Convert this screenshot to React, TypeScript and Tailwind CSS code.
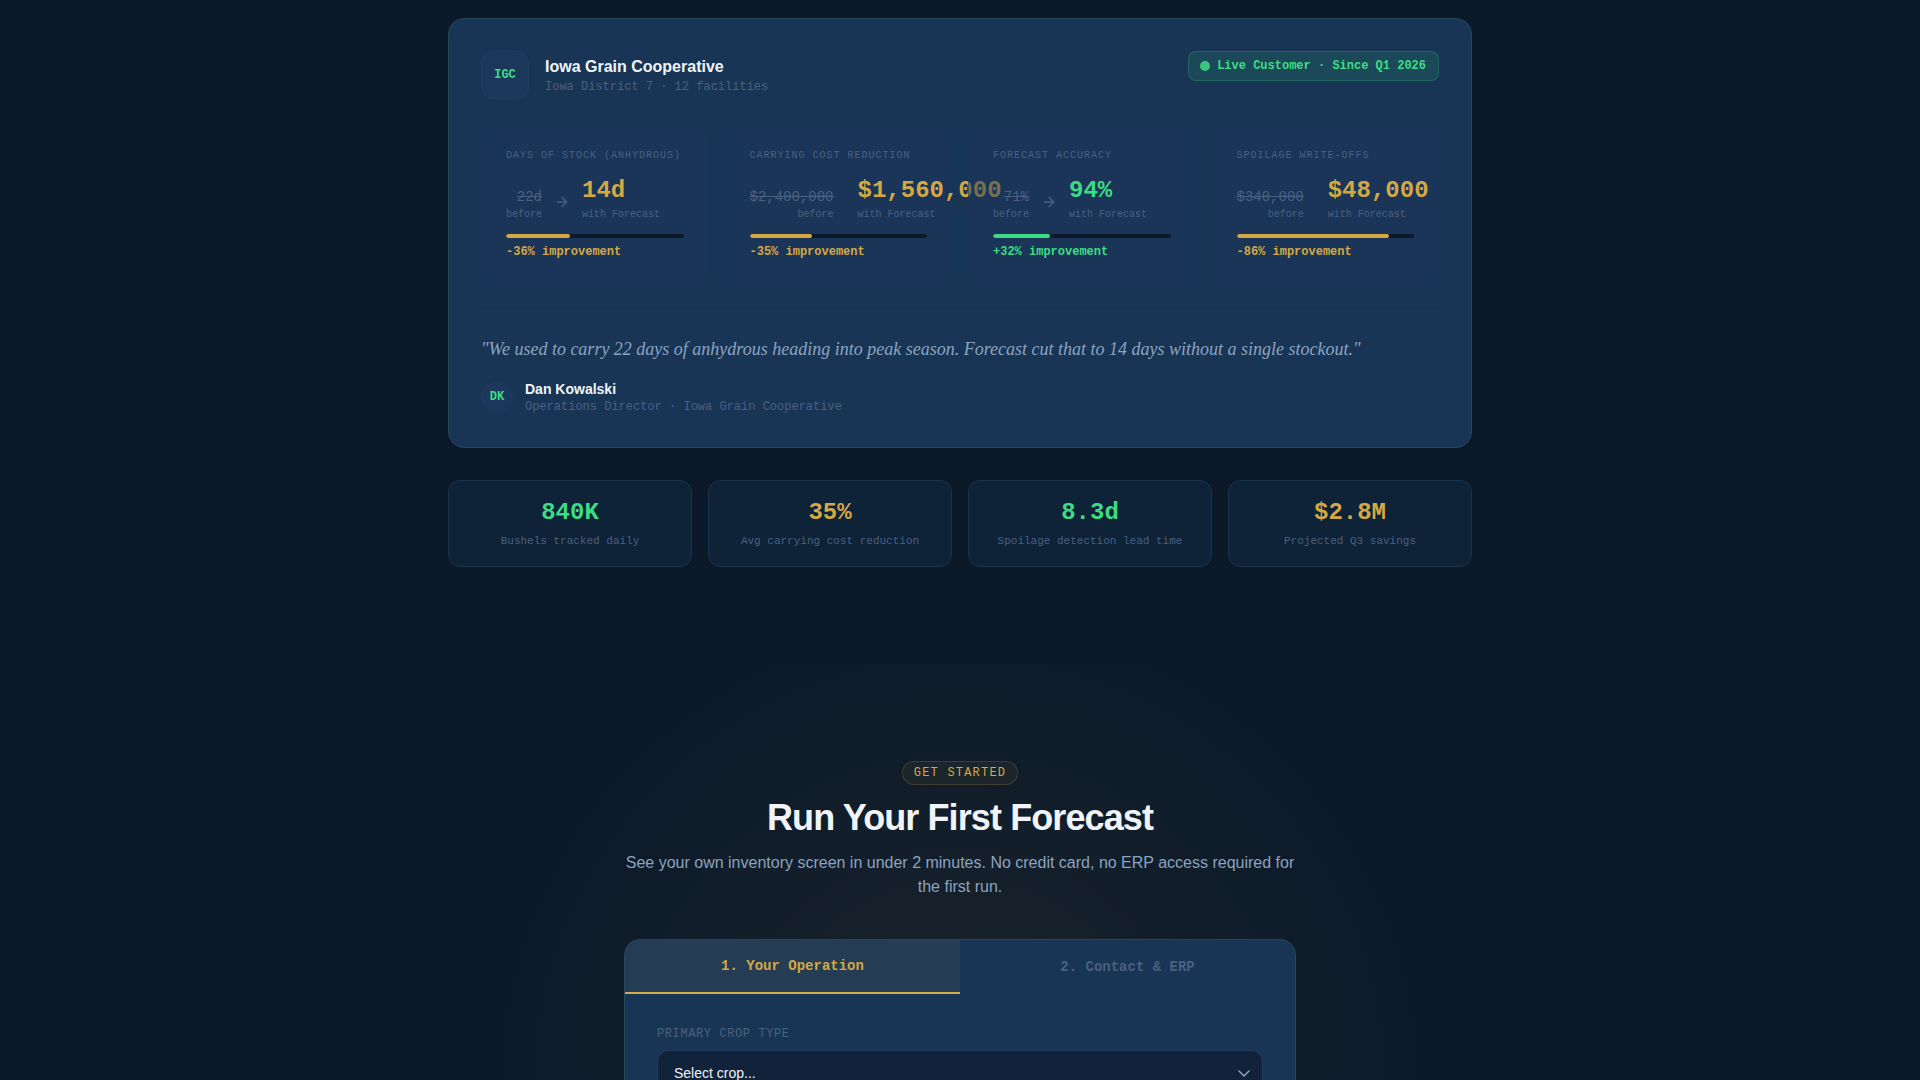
import { useState } from "react";
import { ArrowRight } from "lucide-react";

type Tone = "gold" | "green";

interface Metric {
  label: string;
  before: string;
  after: string;
  change: string;
  fill: number;
  tone: Tone;
}

const METRICS: Metric[] = [
  { label: "Days of Stock (Anhydrous)", before: "22d", after: "14d", change: "-36%", fill: 36, tone: "gold" },
  { label: "Carrying Cost Reduction", before: "$2,400,000", after: "$1,560,000", change: "-35%", fill: 35, tone: "gold" },
  { label: "Forecast Accuracy", before: "71%", after: "94%", change: "+32%", fill: 32, tone: "green" },
  { label: "Spoilage Write-offs", before: "$340,000", after: "$48,000", change: "-86%", fill: 86, tone: "gold" },
];

const STATS: { value: string; label: string; tone: Tone }[] = [
  { value: "840K", label: "Bushels tracked daily", tone: "green" },
  { value: "35%", label: "Avg carrying cost reduction", tone: "gold" },
  { value: "8.3d", label: "Spoilage detection lead time", tone: "green" },
  { value: "$2.8M", label: "Projected Q3 savings", tone: "gold" },
];

const TABS = ["1. Your Operation", "2. Contact & ERP"];
const CROPS = ["Corn", "Soybeans", "Wheat", "Sorghum"];

const TEXT_TONE: Record<Tone, string> = {
  gold: "text-[#d4a843]",
  green: "text-[#3ddc84]",
};

const BAR_TONE: Record<Tone, string> = {
  gold: "bg-[#d4a843]",
  green: "bg-[#3ddc84]",
};

const MONO = "font-['Liberation_Mono',monospace]";

function MetricCard({ metric }: { metric: Metric }) {
  return (
    <div className="isolate min-w-0 rounded-2xl border border-[#1e3a5f]/40 bg-[#1b365b]/50 p-6">
      <p className="mb-3 text-[10px] leading-[15px] tracking-widest text-[#4a6080] uppercase whitespace-nowrap">{metric.label}</p>
      <div className="mb-3 flex items-end gap-3">
        <div className="text-right">
          <div className="text-sm leading-5 text-[#4a6080] line-through">{metric.before}</div>
          <div className="text-[10px] leading-[15px] text-[#4a6080]">before</div>
        </div>
        <ArrowRight className="mb-3 h-4 w-4 min-w-0 text-[#4a6080]" />
        <div>
          <div className={`text-2xl leading-8 font-bold ${TEXT_TONE[metric.tone]}`}>{metric.after}</div>
          <div className="text-[10px] leading-[15px] text-[#4a6080] whitespace-nowrap">with Forecast</div>
        </div>
      </div>
      <div className="h-1 overflow-hidden rounded-full bg-[#0b1929]">
        <div className={`h-full rounded-full ${BAR_TONE[metric.tone]}`} style={{ width: `${metric.fill}%` }} />
      </div>
      <p className={`mt-1 text-xs leading-5 font-bold ${TEXT_TONE[metric.tone]}`}>{metric.change} improvement</p>
    </div>
  );
}

function CustomerCard() {
  return (
    <article className="rounded-2xl border border-[#23495f] bg-[#183555] p-8">
      <header className="mb-6 flex items-start justify-between">
        <div className="flex items-center gap-4">
          <div className={`flex h-12 w-12 items-center justify-center rounded-xl border border-[#203e60] bg-[#1b385b] text-xs font-bold text-[#3ddc84] ${MONO}`}>
            IGC
          </div>
          <div>
            <h3 className="text-base leading-6 font-bold text-[#f0f4f8]">Iowa Grain Cooperative</h3>
            <p className={`text-xs leading-4 text-[#4a6080] ${MONO}`}>Iowa District 7 · 12 facilities</p>
          </div>
        </div>
        <div className={`flex items-center gap-[7px] rounded-lg border border-[#3ddc84]/20 bg-[#3ddc84]/12 py-1.5 pr-3 pl-[11px] text-xs font-bold text-[#3ddc84] ${MONO}`}>
          <span className="h-2.5 w-2.5 rounded-full bg-[#3ddc84]/85" />
          Live Customer · Since Q1 2026
        </div>
      </header>

      <div className={`grid grid-cols-4 gap-4 ${MONO}`}>
        {METRICS.map((metric) => (
          <MetricCard key={metric.label} metric={metric} />
        ))}
      </div>

      <div className="mt-6 border-t border-[#1e3a5f]/80 pt-6">
        <blockquote className="mb-4 font-['Liberation_Serif',serif] text-lg leading-[27px] text-[#8ba3c0] italic">
          "We used to carry 22 days of anhydrous heading into peak season. Forecast cut that to 14 days without a single stockout."
        </blockquote>
        <div className="flex items-center gap-3">
          <div className={`flex h-8 w-8 items-center justify-center rounded-full bg-[#1b385c] text-xs font-bold text-[#3ddc84] ${MONO}`}>
            DK
          </div>
          <div>
            <p className="text-sm leading-5 font-bold text-[#f0f4f8]">Dan Kowalski</p>
            <p className={`text-xs leading-4 text-[#4a6080] ${MONO}`}>Operations Director · Iowa Grain Cooperative</p>
          </div>
        </div>
      </div>
    </article>
  );
}

function ForecastForm() {
  const [tab, setTab] = useState(0);

  return (
    <form className="overflow-hidden rounded-2xl border border-[#23495f] bg-[#183555]">
      <div className="grid grid-cols-2">
        {TABS.map((name, i) => (
          <button
            key={name}
            type="button"
            onClick={() => setTab(i)}
            className={`py-4 text-sm font-bold ${MONO} ${
              tab === i ? "border-b-2 border-[#d4a843] bg-[#d4a843]/7 text-[#d4a843]" : "text-[#4a6080]"
            }`}
          >
            {name}
          </button>
        ))}
      </div>
      <div className="p-8">
        <label htmlFor="crop" className={`mb-2 block text-xs tracking-wider text-[#4a6080] uppercase ${MONO}`}>
          Primary Crop Type
        </label>
        <div className="relative">
          <select
            id="crop"
            className="w-full appearance-none rounded-xl border border-[#1e3a5f] bg-[#11223b] px-4 py-3 text-sm text-[#f0f4f8]"
          >
            <option>Select crop...</option>
            {CROPS.map((crop) => (
              <option key={crop}>{crop}</option>
            ))}
          </select>
          <svg className="pointer-events-none absolute top-5 right-[13px] h-2 w-3" viewBox="0 0 12 8" fill="none">
            <path d="M1 1l5 5 5-5" stroke="#8ba3c0" strokeWidth="1.5" strokeLinecap="round" />
          </svg>
        </div>
      </div>
    </form>
  );
}

export default function App() {
  return (
    <div className="h-screen overflow-hidden bg-[#0b1929] font-['Liberation_Sans',sans-serif]">
      <section className="mx-auto max-w-5xl pt-[18px] pb-24">
        <CustomerCard />
        <div className={`mt-8 grid grid-cols-4 gap-4 text-center ${MONO}`}>
          {STATS.map((stat) => (
            <div key={stat.label} className="rounded-xl border border-[#1a344e] bg-[#0e2238] p-4">
              <div className={`text-2xl leading-8 font-bold ${TEXT_TONE[stat.tone]}`}>{stat.value}</div>
              <div className="mt-1 text-[11px] leading-[17px] text-[#4a6080]">{stat.label}</div>
            </div>
          ))}
        </div>
      </section>

      <section className="bg-[radial-gradient(circle_at_50%_420px,#d4a84314_0,transparent_475px)] py-24">
        <div className="mx-auto max-w-2xl">
          <div className="mb-10 text-center">
            <span className={`inline-block rounded-full border border-[#d4a843]/20 bg-[#d4a843]/6 px-[11px] py-[3px] text-xs tracking-widest text-[#d4a843] uppercase ${MONO}`}>
              Get Started
            </span>
            <h2 className="mt-3 mb-3 text-4xl leading-[42px] font-bold tracking-tight text-[#f0f4f8]">Run Your First Forecast</h2>
            <p className="text-base leading-6 text-[#8ba3c0]">
              See your own inventory screen in under 2 minutes. No credit card, no ERP access required for the first run.
            </p>
          </div>
          <ForecastForm />
        </div>
      </section>
    </div>
  );
}
